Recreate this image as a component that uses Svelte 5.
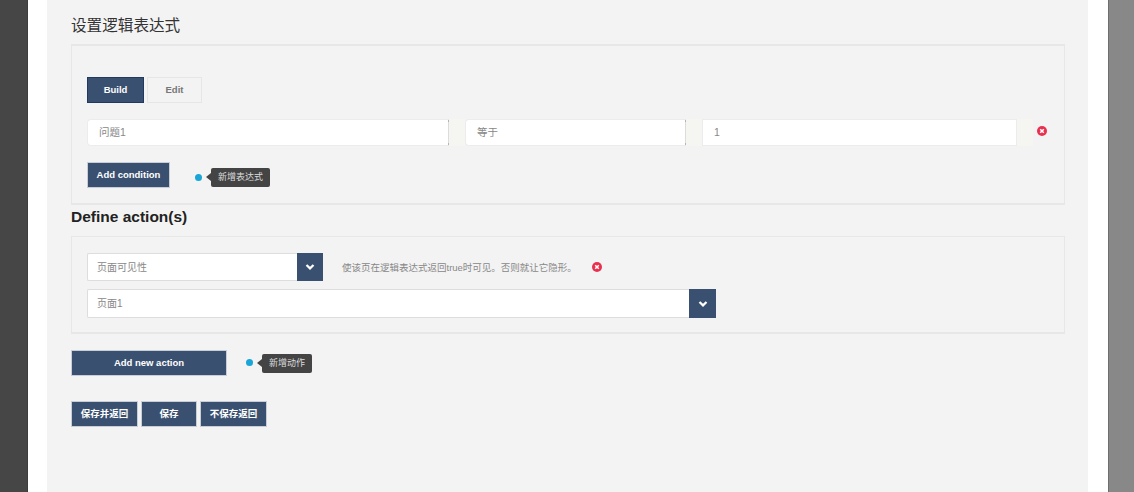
<script>
	const actions = ['保存并返回', '保存', '不保存返回'];
</script>

<div class="page">
	<div class="shade-left"></div>
	<div class="modal">
		<div class="panel">
			<h2 class="title">设置逻辑表达式</h2>
			<section class="box logic">
				<div class="tabs">
					<button class="btn tab">Build</button>
					<button class="tab-off">Edit</button>
				</div>
				<div class="row">
					<div class="field first">问题1</div>
					<span class="addon marked"></span>
					<div class="field second">等于</div>
					<span class="addon marked"></span>
					<div class="field third">1</div>
					<span class="addon"></span>
					<svg class="remove" viewBox="0 0 10 10" aria-hidden="true">
						<circle cx="5" cy="5" r="5" fill="#e8304f" />
						<path d="M3.2 3.2l3.6 3.6M6.8 3.2l-3.6 3.6" stroke="#fff" stroke-width="1.5" />
					</svg>
				</div>
				<div class="hint-row">
					<button class="btn add-cond">Add condition</button>
					<span class="dot cond-dot"></span>
					<span class="tip">新增表达式</span>
				</div>
			</section>

			<h3 class="subtitle">Define action(s)</h3>
			<section class="box acts">
				<div class="act-row">
					<div class="select short">
						<span class="value">页面可见性</span>
						<span class="arrow">
							<svg viewBox="0 0 10 8" aria-hidden="true"><path d="M1.5 2l3.5 3.4L8.5 2" fill="none" stroke="#fff" stroke-width="2.2" /></svg>
						</span>
					</div>
					<span class="desc">使该页在逻辑表达式返回true时可见。否则就让它隐形。</span>
					<svg class="remove act-remove" viewBox="0 0 10 10" aria-hidden="true">
						<circle cx="5" cy="5" r="5" fill="#e8304f" />
						<path d="M3.2 3.2l3.6 3.6M6.8 3.2l-3.6 3.6" stroke="#fff" stroke-width="1.5" />
					</svg>
				</div>
				<div class="select long">
					<span class="value">页面1</span>
					<span class="arrow wide">
						<svg viewBox="0 0 10 8" aria-hidden="true"><path d="M1.5 2l3.5 3.4L8.5 2" fill="none" stroke="#fff" stroke-width="2.2" /></svg>
					</span>
				</div>
			</section>

			<div class="hint-row add-row">
				<button class="btn add-action">Add new action</button>
				<span class="dot action-dot"></span>
				<span class="tip short-tip">新增动作</span>
			</div>

			<div class="save-row">
				{#each actions as label}
					<button class="btn save">{label}</button>
				{/each}
			</div>
		</div>
	</div>
	<div class="shade-right"></div>
</div>

<style>
	:global(body) {
		margin: 0;
		background: #fff;
		font-family: "Liberation Sans", "Noto Sans CJK SC", sans-serif;
	}

	.page {
		display: flex;
		height: 492px;
		overflow: hidden;
	}

	.shade-left {
		width: 28px;
		background: #464646;
		border-right: 1px solid #3c3c3c;
		box-sizing: border-box;
	}

	.shade-right {
		width: 26px;
		background: #888;
		border-left: 1px solid #6e6e6e;
		box-sizing: border-box;
	}

	.modal {
		flex: 1;
		padding: 0 20px 0 19px;
		background: #fff;
	}

	.panel {
		height: 100%;
		box-sizing: border-box;
		padding: 0 23px 0 24px;
		background: #f3f3f3;
	}

	.title {
		margin: 0;
		height: 44px;
		padding-top: 16px;
		box-sizing: border-box;
		font-size: 15.6px;
		line-height: 20px;
		font-weight: 400;
		color: #333;
	}

	.box {
		box-sizing: border-box;
		border: 1px solid #e7e7e7;
		border-top-width: 2px;
		border-bottom-width: 2px;
		padding: 0 15px;
	}

	.logic {
		height: 161px;
		padding-top: 31px;
	}

	.tabs {
		display: flex;
		gap: 3px;
	}

	.btn {
		box-sizing: border-box;
		border: 1px solid #c9ced6;
		background: #3a5070;
		color: #fff;
		font: 700 9.5px/1 "Liberation Sans", "Noto Sans CJK SC", sans-serif;
		padding: 0;
		margin: 0;
	}

	.tab {
		width: 57px;
		height: 26px;
		border-color: #1f3a60;
	}

	.tab-off {
		box-sizing: border-box;
		width: 55px;
		height: 26px;
		padding: 0;
		border: 1px solid #e6e6e6;
		background: #f3f3f3;
		color: #777;
		font: 700 9.5px/1 "Liberation Sans", sans-serif;
	}

	.row {
		display: flex;
		align-items: center;
		margin-top: 16px;
		height: 27px;
	}

	.field {
		box-sizing: border-box;
		height: 27px;
		padding: 0 11px;
		border: 1px solid #ececec;
		background: #fff;
		color: #888;
		font-size: 10.5px;
		line-height: 25px;
	}

	.first {
		width: 362px;
		border-radius: 4px 0 0 4px;
		border-right-color: #dcdcdc;
	}

	.second {
		width: 221px;
		border-radius: 4px 0 0 4px;
		border-right-color: #dcdcdc;
	}

	.third {
		width: 315px;
	}

	.addon {
		position: relative;
		width: 16px;
		height: 27px;
		background: #f5f5f2;
	}

	.marked::before,
	.marked::after {
		content: '';
		position: absolute;
		left: -1px;
		width: 1px;
		height: 2px;
		background: #b0b4bc;
	}

	.marked::before {
		top: 1px;
	}

	.marked::after {
		bottom: 1px;
	}

	.remove {
		width: 10px;
		height: 10px;
		margin: -3px 0 0 4px;
	}

	.hint-row {
		display: flex;
		align-items: center;
	}

	.logic .hint-row {
		margin-top: 16px;
		height: 26px;
	}

	.add-cond {
		width: 83px;
		height: 26px;
	}

	.dot {
		width: 7px;
		height: 7px;
		border-radius: 50%;
		background: #18a5d8;
		flex: none;
	}

	.cond-dot {
		margin: 4px 0 0 25px;
	}

	.tip {
		position: relative;
		box-sizing: border-box;
		height: 19px;
		width: 59px;
		margin: 4px 0 0 9px;
		background: #444;
		border-radius: 2px;
		color: #ddd;
		font-size: 9px;
		line-height: 19px;
		text-align: center;
	}

	.tip::before {
		content: '';
		position: absolute;
		left: -5px;
		top: 5px;
		border: 4px solid transparent;
		border-left: 0;
		border-right: 5px solid #444;
	}

	.subtitle {
		margin: 0;
		height: 31px;
		padding-top: 3px;
		box-sizing: border-box;
		font-size: 15.5px;
		line-height: 18px;
		font-weight: 700;
		color: #222;
	}

	.acts {
		height: 98px;
		padding-top: 16px;
		border-top-width: 1px;
	}

	.act-row {
		display: flex;
		align-items: center;
		height: 28px;
	}

	.select {
		box-sizing: border-box;
		display: flex;
		justify-content: space-between;
		border: 1px solid #ddd;
		border-right: 0;
		border-radius: 2px 0 0 2px;
		background: #fff;
		color: #888;
		font-size: 10px;
	}

	.value {
		padding: 0 0 2px 9px;
		align-self: center;
	}

	.short {
		width: 236px;
		height: 28px;
		flex: none;
	}

	.long {
		width: 629px;
		height: 29px;
		margin-top: 8px;
	}

	.arrow {
		display: flex;
		align-items: center;
		justify-content: center;
		width: 26px;
		margin: -1px 0;
		background: #3a5070;
	}

	.wide {
		width: 27px;
	}

	.arrow svg {
		width: 10px;
		height: 8px;
	}

	.desc {
		margin-left: 19px;
		font-size: 9.5px;
		color: #888;
		white-space: nowrap;
	}

	.act-remove {
		margin: 0 0 0 15px;
	}

	.add-row {
		margin-top: 16px;
		height: 26px;
	}

	.add-action {
		width: 156px;
		height: 26px;
	}

	.action-dot {
		margin: 0 0 0 19px;
		transform: translateY(-1px);
	}

	.short-tip {
		width: 50px;
		margin: 0 0 0 9px;
	}

	.save-row {
		display: flex;
		gap: 3px;
		margin-top: 25px;
	}

	.save {
		width: 67px;
		height: 26px;
		font-size: 9.5px;
	}

	.save:nth-child(2) {
		width: 56px;
	}
</style>
